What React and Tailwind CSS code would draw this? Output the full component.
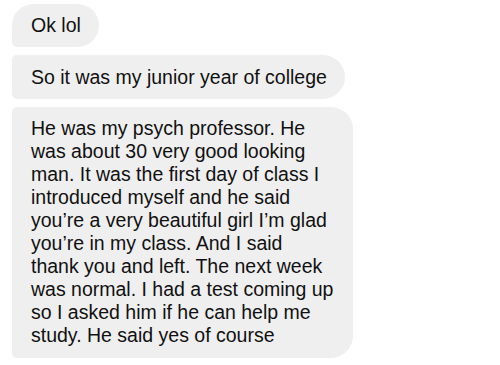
import React from "react";

const Bubble = ({ children, className }) => (
  <div
    className={`bg-[#efefef] text-[#111] pl-[19px] pr-[18px] text-[19.5px] whitespace-nowrap ${className}`}
  >
    {children}
  </div>
);

const lines = [
  "He was my psych professor. He",
  "was about 30 very good looking",
  "man. It was the first day of class I",
  "introduced myself and he said",
  "you’re a very beautiful girl I’m glad",
  "you’re in my class. And I said",
  "thank you and left. The next week",
  "was normal. I had a test coming up",
  "so I asked him if he can help me",
  "study. He said yes of course",
];

export default function App() {
  return (
    <div
      className="w-[500px] h-[365px] bg-white overflow-hidden pt-1 pl-3 flex flex-col items-start gap-2"
      style={{ fontFamily: '"Liberation Sans", Arial, sans-serif' }}
    >
      <Bubble className="rounded-[22px] rounded-bl-[5px] py-[8px] leading-[27px]">
        Ok lol
      </Bubble>
      <Bubble className="rounded-r-[22px] rounded-l-[5px] py-[8px] leading-[28px]">
        So it was my junior year of college
      </Bubble>
      <Bubble className="rounded-r-[22px] rounded-l-[5px] pt-[10px] pb-[11px] w-[341px] leading-[23px]">
        {lines.map((l) => (
          <div key={l}>{l}</div>
        ))}
      </Bubble>
    </div>
  );
}
